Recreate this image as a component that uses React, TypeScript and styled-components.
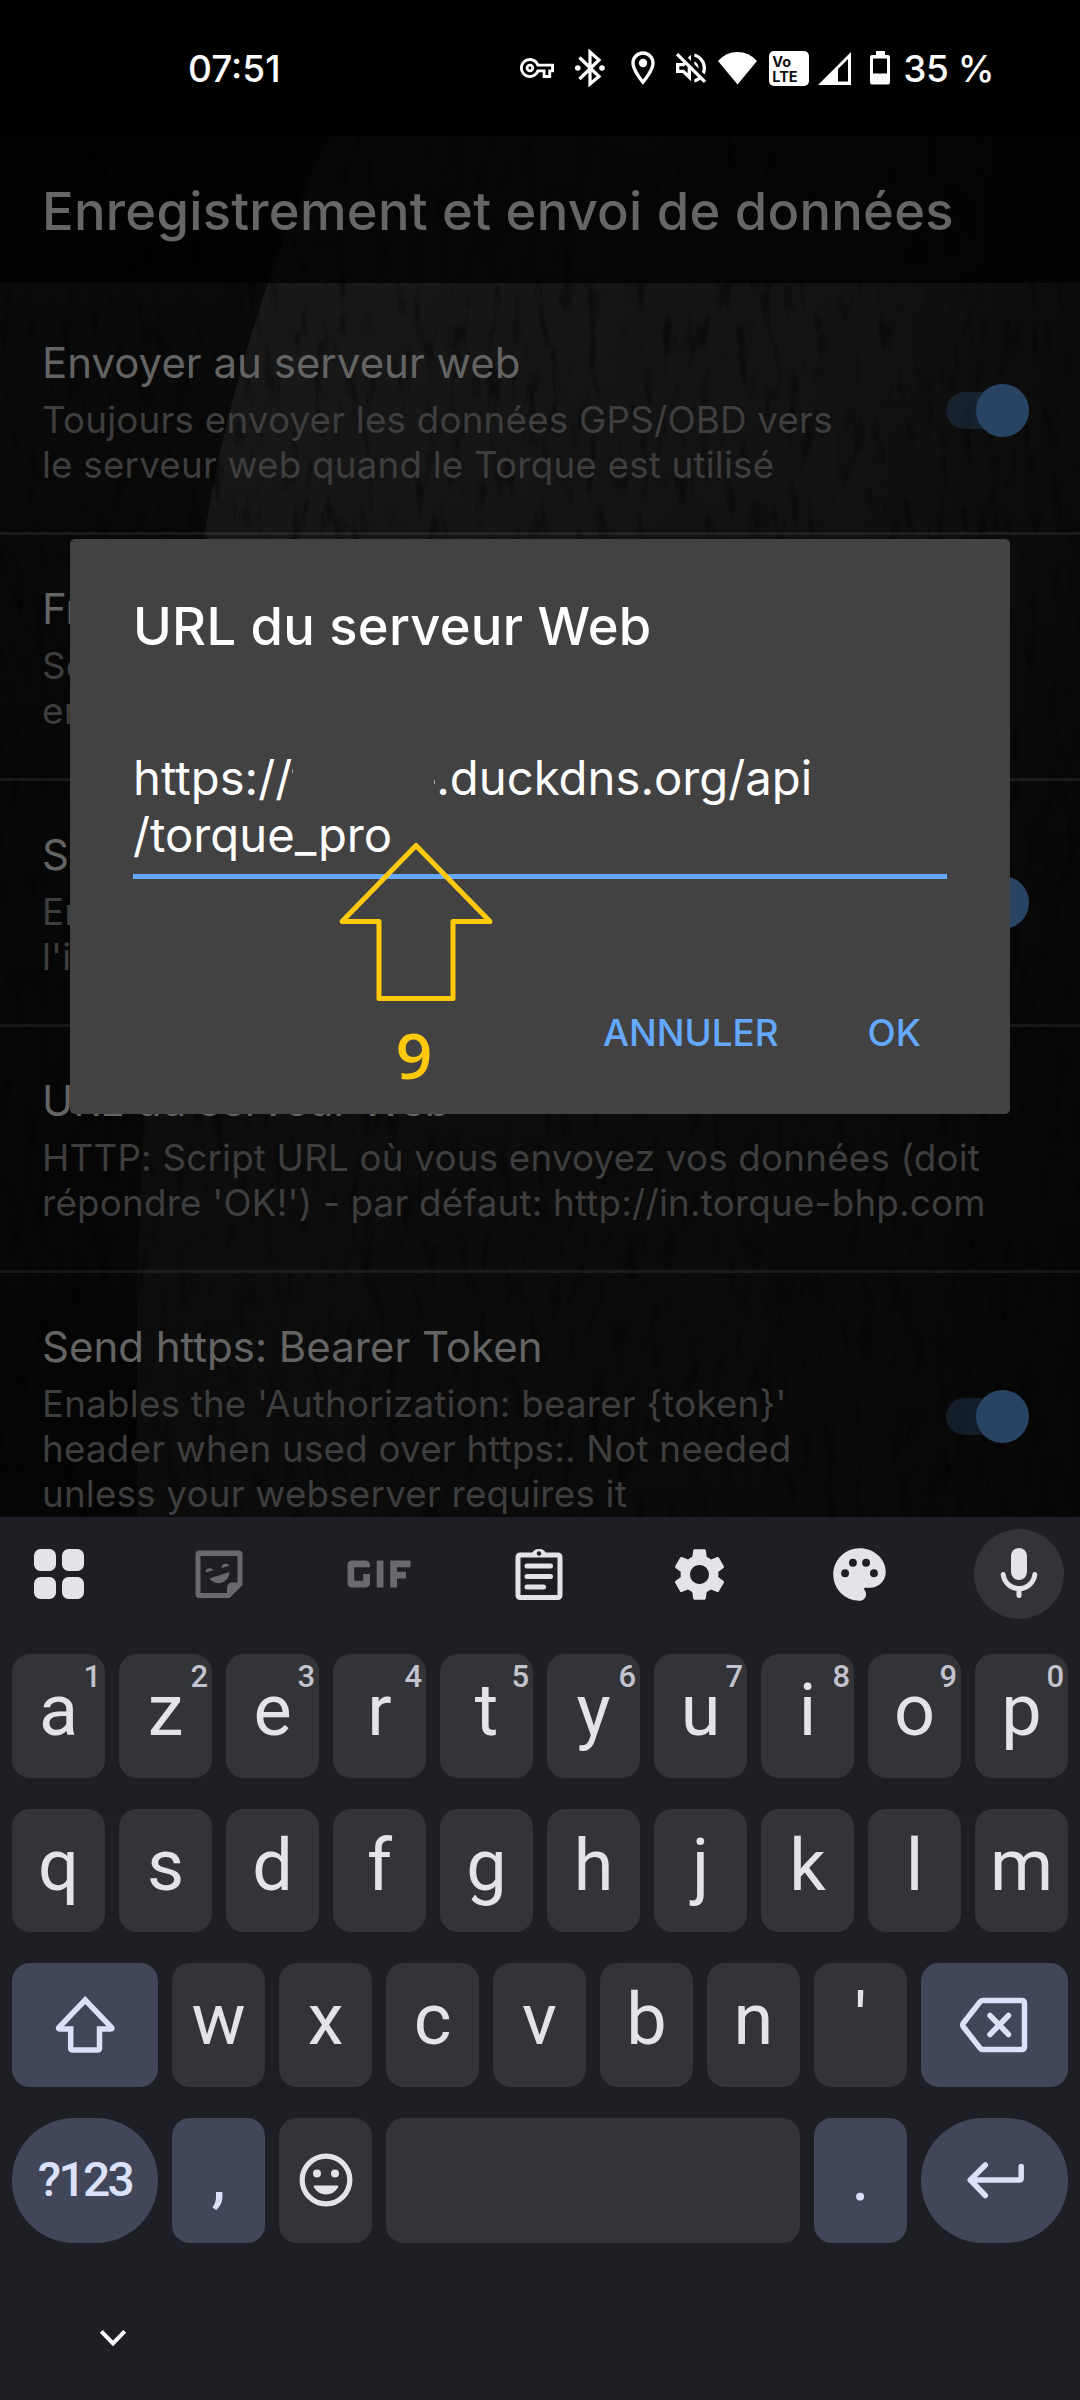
import React from "react";
import styled, { createGlobalStyle, css } from "styled-components";
import {
  MdOutlineVpnKey,
  MdOutlineLocationOn,
  MdOutlineVolumeOff,
  MdGif,
  MdSettings,
} from "react-icons/md";

const GlobalStyle = createGlobalStyle`
  * { box-sizing: border-box; }
  body { margin: 0; background: #000; }
`;

const UI_FONT = `Inter, Roboto, "Liberation Sans", sans-serif`;
const KEY_FONT = `Roboto, Inter, "Liberation Sans", sans-serif`;

const Screen = styled.div`
  position: relative;
  width: 1080px;
  height: 2400px;
  display: flex;
  flex-direction: column;
  overflow: hidden;
  background: #000;
  font-family: ${UI_FONT};
`;

/* ---------- status bar ---------- */

const StatusBar = styled.header`
  height: 136px;
  flex: none;
  display: flex;
  align-items: flex-start;
  justify-content: space-between;
  padding: 46px 86px 0 188px;
  color: #fff;
`;

const StatusText = styled.span<{ $gap?: number; $light?: boolean }>`
  font-size: 37px;
  font-weight: ${(p) => (p.$light ? 450 : 500)};
  line-height: 45px;
  letter-spacing: ${(p) => (p.$light ? -0.5 : 0)}px;
  margin-left: ${(p) => p.$gap ?? 0}px;
  white-space: pre;
`;

const StatusIcons = styled.div`
  display: flex;
  align-items: center;
  height: 44px;
`;

const Slot = styled.span<{ $w: number; $gap?: number }>`
  width: ${(p) => p.$w}px;
  margin-left: ${(p) => p.$gap ?? 0}px;
  height: 44px;
  display: flex;
  align-items: center;
  justify-content: center;
  svg { flex: none; display: block; }
`;

const VoLte = styled.span`
  width: 40px;
  height: 35px;
  border-radius: 5px;
  background: #fff;
  color: #111;
  padding: 3px 0 0 3px;
  font: 700 14.5px/15px ${UI_FONT};
  display: flex;
  flex-direction: column;
`;

/* ---------- settings page ---------- */

const Page = styled.main`
  position: relative;
  height: 1381px;
  flex: none;
  overflow: hidden;
  display: flex;
  flex-direction: column;
`;

const Backdrop = styled.svg`
  position: absolute;
  inset: 0;
  z-index: 0;
`;

const TitleBar = styled.div`
  position: relative;
  height: 147px;
  flex: none;
  display: flex;
  align-items: center;
  padding: 3px 42px 0;
  background: rgba(0, 0, 0, 0.72);
`;

const PageTitle = styled.h1`
  margin: 0;
  font-size: 52.5px;
  font-weight: 500;
  line-height: 64px;
  letter-spacing: 0.25px;
  color: #666;
  white-space: nowrap;
`;

const List = styled.div`
  position: relative;
  padding-top: 6px;
  display: flex;
  flex-direction: column;
`;

const Item = styled.div`
  flex: none;
  display: flex;
  align-items: center;
  justify-content: space-between;
  padding: 48px 51px 45px 42px;
  border-bottom: 3px solid rgba(255, 255, 255, 0.07);
`;

const ItemTitle = styled.div`
  font-size: 42px;
  line-height: 51px;
  color: #646464;
  margin-bottom: 9px;
  white-space: nowrap;
`;

const ItemLine = styled.div`
  font-size: 36.75px;
  line-height: 45px;
  letter-spacing: 0.21px;
  color: #3e3e3e;
  white-space: nowrap;
`;

const Switch = styled.div`
  width: 83px;
  height: 37px;
  margin: 0 0 4px;
  flex: none;
  border-radius: 19px;
  background: rgba(44, 72, 112, 0.34);
  display: flex;
  justify-content: flex-end;
  align-items: center;
`;

const Thumb = styled.div`
  width: 53px;
  height: 53px;
  flex: none;
  border-radius: 50%;
  background: #294363;
`;

/* ---------- dialog ---------- */

const Dialog = styled.section`
  position: absolute;
  left: 70px;
  top: 538.5px;
  width: 940px;
  height: 575px;
  border-radius: 5px;
  background: #424242;
  padding: 55px 63px 0;
  display: flex;
  flex-direction: column;
`;

const DialogTitle = styled.h2`
  margin: 0 0 91px;
  font-size: 52.5px;
  font-weight: 500;
  line-height: 64px;
  letter-spacing: 0.25px;
  color: #fff;
`;

const UrlField = styled.div`
  border-bottom: 5px solid #64a8ff;
  height: 130px;
  font-size: 47.25px;
  line-height: 57px;
  color: #fff;
  white-space: nowrap;
`;

const Blank = styled.span`
  display: inline-flex;
  vertical-align: top;
  justify-content: space-between;
  width: 144px;
  height: 40px;
  padding: 0 1px 0 0;
`;

const Speck = styled.span<{ $top: number }>`
  width: 1px;
  height: 4px;
  margin-top: ${(p) => p.$top}px;
  background: #a0a0a0;
`;

const Actions = styled.div`
  display: flex;
  justify-content: flex-end;
  gap: 89px;
  margin-top: 131px;
  padding-right: 26px;
`;

const Action = styled.span`
  font-size: 36.75px;
  font-weight: 500;
  line-height: 45px;
  color: #64a8ff;
`;

const Annotation = styled.div`
  position: absolute;
  left: 336px;
  top: 840px;
  width: 160px;
  display: flex;
  flex-direction: column;
  align-items: center;
  color: #ffc90e;
  svg { display: block; }
`;

const StepNumber = styled.span`
  font: 600 64px/50px "Open Sans", "Noto Sans", sans-serif;
  margin: 26px 4px 0 0;
`;

/* ---------- keyboard ---------- */

const Keyboard = styled.section`
  flex: 1;
  background: #1e1f24;
  display: flex;
  flex-direction: column;
  font-family: ${KEY_FONT};
`;

const Toolbar = styled.div`
  height: 137px;
  flex: none;
  display: flex;
  align-items: flex-start;
  gap: 70px;
  padding: 12px 0 0 14px;
`;

const Tool = styled.span<{ $active?: boolean; $muted?: boolean }>`
  width: 90px;
  height: 90px;
  flex: none;
  border-radius: 50%;
  display: flex;
  align-items: center;
  justify-content: center;
  color: ${(p) => (p.$muted ? "#696a6f" : "#e3e3e8")};
  background: ${(p) => (p.$active ? "#333438" : "transparent")};
  svg { flex: none; display: block; }
`;

const Rows = styled.div`
  display: flex;
  flex-direction: column;
  gap: 31px;
  padding: 0 12px;
`;

const Row = styled.div<{ $last?: boolean }>`
  display: flex;
  justify-content: space-between;
  gap: 14px;
  height: ${(p) => (p.$last ? 125 : 123.6)}px;
`;

const Key = styled.div<{ $accent?: boolean; $wide?: number; $space?: boolean; $round?: boolean }>`
  position: relative;
  flex: ${(p) => (p.$space ? "1 1 0" : "none")};
  width: ${(p) => p.$wide ?? 93}px;
  border-radius: ${(p) => (p.$round ? 62 : 18)}px;
  background: ${(p) => (p.$accent ? "#414659" : "#333438")};
  color: ${(p) => (p.$accent ? "#dce1fa" : "#e3e3e8")};
  display: flex;
  align-items: center;
  justify-content: center;
  font-size: 72px;
  line-height: 84px;
  svg { display: block; }
  ${(p) =>
    p.$round &&
    css`
      font-size: 48px;
      font-weight: 500;
      letter-spacing: -2.7px;
    `}
`;

const Glyph = styled.span`
  padding-bottom: 9px;
`;

const Hint = styled.span`
  position: absolute;
  top: 5px;
  right: 4px;
  font-size: 31px;
  line-height: 36px;
  font-weight: 500;
  color: #c3c3cf;
`;

const NavBar = styled.div`
  display: flex;
  padding: 83px 0 0 96px;
`;

const SETTINGS = [
  {
    title: "Envoyer au serveur web",
    lines: ["Toujours envoyer les données GPS/OBD vers", "le serveur web quand le Torque est utilisé"],
    on: true,
  },
  { title: "Fr", lines: ["Se", "en"] },
  { title: "S", lines: ["En", "l'i"], on: true },
  {
    title: "URL du serveur Web",
    lines: ["HTTP: Script URL où vous envoyez vos données (doit", "répondre 'OK!') - par défaut: http://in.torque-bhp.com"],
  },
  {
    title: "Send https: Bearer Token",
    lines: ["Enables the 'Authorization: bearer {token}'", "header when used over https:. Not needed", "unless your webserver requires it"],
    on: true,
  },
];

const TOP = "azertyuiop".split("");
const MIDDLE = "qsdfghjklm".split("");
const BOTTOM = "wxcvbn'".split("");

function Background() {
  return (
    <Backdrop width="1080" height="1381" viewBox="0 136 1080 1381">
      <defs>
        <linearGradient id="left" x1="0" y1="0" x2="0" y2="1">
          <stop offset="0" stopColor="#0b0b0b" />
          <stop offset="0.4" stopColor="#080808" />
          <stop offset="1" stopColor="#050505" />
        </linearGradient>
        <linearGradient id="disc" x1="0" y1="0" x2="0" y2="1">
          <stop offset="0" stopColor="#1a1a1a" />
          <stop offset="0.25" stopColor="#171717" />
          <stop offset="0.5" stopColor="#101010" />
          <stop offset="0.75" stopColor="#0d0d0d" />
          <stop offset="1" stopColor="#0c0c0c" />
        </linearGradient>
        <linearGradient id="fade" x1="0" y1="0" x2="1" y2="0">
          <stop offset="0.25" stopColor="#000" stopOpacity="0" />
          <stop offset="0.8" stopColor="#000" stopOpacity="0.25" />
          <stop offset="1" stopColor="#000" stopOpacity="0.55" />
        </linearGradient>
        <filter id="grain" x="0" y="0" width="100%" height="100%">
          <feTurbulence type="fractalNoise" baseFrequency="0.08 0.022" numOctaves="4" seed="7" />
          <feColorMatrix values="0 0 0 0 0  0 0 0 0 0  0 0 0 0 0  4 0 0 0 -2.25" />
        </filter>
      </defs>
      <rect y="136" width="1080" height="1381" fill="url(#left)" />
      <path d="M330 136Q292 210 268 283Q222 420 205 533Q150 850 144 1113L137 1290V1517H1080V136Z" fill="url(#disc)" />
      <rect y="136" width="1080" height="1381" fill="url(#fade)" />
      <rect y="136" width="1080" height="1381" filter="url(#grain)" opacity="0.4" />
    </Backdrop>
  );
}

function StatusRow() {
  return (
    <StatusBar>
      <StatusText>07:51</StatusText>
      <StatusIcons>
        <Slot $w={34}><MdOutlineVpnKey size={34} /></Slot>
        <Slot $w={30} $gap={21}>
          <svg width="30" height="38" viewBox="577 49 30 38" fill="none" stroke="#fff" strokeWidth="3.2">
            <path d="M581.5 57.5L601 76.5L592 84V52L601 60L581.5 79" />
            <circle cx="579.8" cy="68" r="2.8" fill="#fff" stroke="none" />
            <circle cx="604" cy="68" r="2.8" fill="#fff" stroke="none" />
          </svg>
        </Slot>
        <Slot $w={24} $gap={26}><MdOutlineLocationOn size={40} /></Slot>
        <Slot $w={30} $gap={21}><MdOutlineVolumeOff size={40} /></Slot>
        <Slot $w={39} $gap={12}>
          <svg width="39" height="34" viewBox="720 50 39 34" fill="#fff">
            <path d="M720 60Q728 51 739.5 51T759 60L739.5 83.5Z" />
          </svg>
        </Slot>
        <Slot $w={40} $gap={12}>
          <VoLte><span>Vo</span><span>LTE</span></VoLte>
        </Slot>
        <Slot $w={34} $gap={9}>
          <svg width="34" height="34" viewBox="820 50 34 34" fill="#fff" fillRule="evenodd">
            <path d="M820 84L853 51V84ZM840 68V80.500H850V58Z" />
          </svg>
        </Slot>
        <Slot $w={20} $gap={18}>
          <svg width="20" height="34" viewBox="872 50 20 34" fill="#fff" fillRule="evenodd">
            <path d="M878 50H887V54H890a2 2 0 0 1 2 2V81.500a2 2 0 0 1-2 2H874a2 2 0 0 1-2-2V56a2 2 0 0 1 2-2H878ZM875 57.500V72.500H889V57.500Z" />
          </svg>
        </Slot>
        <StatusText $gap={13} $light>35 %</StatusText>
      </StatusIcons>
    </StatusBar>
  );
}

function StickerIcon() {
  return (
    <svg width="50" height="50" viewBox="194.500 1549 50 50" fill="currentColor">
      <path
        fillRule="evenodd"
        d="M200 1550.500H239a4 4 0 0 1 4 4V1585L230 1598H200a4 4 0 0 1-4-4V1554.500a4 4 0 0 1 4-4ZM201 1556V1593H227.500V1587.500a5 5 0 0 1 5-5H238V1556Z"
      />
      <path d="M206 1572.500a4.300 4.300 0 0 1 8-2.200ZM222 1568a4.300 4.300 0 0 1 8-2.200ZM210 1578.500L230 1572A11 11 0 0 1 210 1578.500Z" />
    </svg>
  );
}

function ClipboardIcon() {
  return (
    <svg width="50" height="56" viewBox="514.500 1544 50 56" fill="none" stroke="currentColor" strokeWidth="5" strokeLinecap="round">
      <rect x="518.500" y="1553" width="42" height="42.500" rx="2" />
      <path d="M527.500 1564H551M527.500 1574.500H551M527.500 1585H544" />
      <path d="M532 1553a7.700 7.700 0 0 1 15 0Z" fill="currentColor" stroke="none" />
      <circle cx="539.500" cy="1551.500" r="2.200" fill="#1e1f24" stroke="none" />
    </svg>
  );
}

function KeyboardPanel() {
  return (
    <Keyboard>
      <Toolbar>
        <Tool>
          <svg width="50" height="50" viewBox="0 0 50 50" fill="currentColor">
            <rect width="22" height="22" rx="6.500" />
            <rect x="28" width="22" height="22" rx="6.500" />
            <rect y="28" width="22" height="22" rx="6.500" />
            <rect x="28" y="28" width="22" height="22" rx="6.500" />
          </svg>
        </Tool>
        <Tool $muted><StickerIcon /></Tool>
        <Tool $muted><MdGif size={108} /></Tool>
        <Tool><ClipboardIcon /></Tool>
        <Tool><MdSettings size={63} /></Tool>
        <Tool>
          <svg width="63" height="63" viewBox="0 0 24 24" fill="currentColor" fillRule="evenodd">
            <path d="M12 2C6.490 2 2 6.490 2 12s4.490 10 10 10c1.380 0 2.500-1.120 2.500-2.500 0-.610-.230-1.200-.640-1.670-.080-.100-.130-.210-.130-.330 0-.280.220-.500.500-.500H16c3.310 0 6-2.690 6-6 0-4.960-4.490-9-10-9zM6.500 13a1.500 1.500 0 1 1 0-3 1.500 1.500 0 0 1 0 3zm3-4a1.500 1.500 0 1 1 0-3 1.500 1.500 0 0 1 0 3zm5 0a1.500 1.500 0 1 1 0-3 1.500 1.500 0 0 1 0 3zm3 4a1.500 1.500 0 1 1 0-3 1.500 1.500 0 0 1 0 3z" />
          </svg>
        </Tool>
        <Tool $active>
          <svg width="40" height="52" viewBox="999.500 1548 40 52" fill="none" stroke="currentColor" strokeWidth="5" strokeLinecap="round">
            <rect x="1011.500" y="1548" width="16" height="32" rx="8" fill="currentColor" stroke="none" />
            <path d="M1003.700 1574.500a15.900 15.900 0 0 0 31.600 0M1019.500 1589V1595.500" />
          </svg>
        </Tool>
      </Toolbar>
      <Rows>
        <Row>
          {TOP.map((k, i) => (
            <Key key={k}>
              <Glyph>{k}</Glyph>
              <Hint>{(i + 1) % 10}</Hint>
            </Key>
          ))}
        </Row>
        <Row>
          {MIDDLE.map((k) => (
            <Key key={k}><Glyph>{k}</Glyph></Key>
          ))}
        </Row>
        <Row>
          <Key $accent $wide={146}>
            <svg width="62" height="60" viewBox="54 1995 62 60" fill="none" stroke="currentColor" strokeWidth="5.500">
              <path d="M85.200 2000L59.300 2027Q57.500 2029 60 2029H70.700V2048Q70.700 2050 72.700 2050H97.500Q99.500 2050 99.500 2048V2029H110.500Q113 2029 111.200 2027Z" />
            </svg>
          </Key>
          {BOTTOM.map((k) => (
            <Key key={k}><Glyph>{k}</Glyph></Key>
          ))}
          <Key $accent $wide={147}>
            <svg width="70" height="60" viewBox="959.500 1995 70 60" fill="none" stroke="currentColor" strokeWidth="5.500" strokeLinecap="round">
              <path d="M982 2000.500H1021Q1024 2000.500 1024 2003.500V2046.500Q1024 2049.500 1021 2049.500H982Q980.500 2049.500 979.500 2048L963 2027Q961.500 2025 963 2023L979.500 2002Q980.500 2000.500 982 2000.500Z" />
              <path d="M989.500 2015.500L1008 2034.500M1008 2015.500L989.500 2034.500" />
            </svg>
          </Key>
        </Row>
        <Row $last>
          <Key $accent $wide={146} $round>?123</Key>
          <Key $accent><Glyph>,</Glyph></Key>
          <Key>
            <svg width="54" height="54" viewBox="298.500 2153.500 54 54" fill="currentColor">
              <circle cx="325.500" cy="2180.500" r="23.800" fill="none" stroke="currentColor" strokeWidth="5.200" />
              <circle cx="316.500" cy="2174" r="4" />
              <circle cx="334.500" cy="2174" r="4" />
              <path d="M314 2186H337Q338.500 2186 337.500 2188Q333 2195 325.500 2195T313.500 2188Q312.500 2186 314 2186Z" />
            </svg>
          </Key>
          <Key $space />
          <Key $accent><Glyph>.</Glyph></Key>
          <Key $accent $wide={147} $round>
            <svg width="60" height="40" viewBox="964.500 2160.500 60 40" fill="none" stroke="currentColor" strokeWidth="5.500" strokeLinecap="round" strokeLinejoin="round">
              <path d="M984.800 2165.500L969.800 2180.500L984.800 2196M971 2180.500H1018.700Q1020.700 2180.500 1020.700 2178.500V2167" />
            </svg>
          </Key>
        </Row>
      </Rows>
      <NavBar>
        <svg width="34" height="24" viewBox="96 2326 34 24" fill="none" stroke="#fff" strokeWidth="4">
          <path d="M101.300 2331.300L113 2343.300L124.700 2331.300" />
        </svg>
      </NavBar>
    </Keyboard>
  );
}

export default function App() {
  return (
    <Screen>
      <GlobalStyle />
      <StatusRow />
      <Page>
        <Background />
        <TitleBar>
          <PageTitle>Enregistrement et envoi de données</PageTitle>
        </TitleBar>
        <List>
          {SETTINGS.map((s) => (
            <Item key={s.title}>
              <div>
                <ItemTitle>{s.title}</ItemTitle>
                {s.lines.map((l) => (
                  <ItemLine key={l}>{l}</ItemLine>
                ))}
              </div>
              {s.on && <Switch><Thumb /></Switch>}
            </Item>
          ))}
        </List>
      </Page>
      <KeyboardPanel />
      <Dialog>
        <DialogTitle>URL du serveur Web</DialogTitle>
        <UrlField>
          https://
          <Blank><Speck $top={20} /><Speck $top={31} /></Blank>
          .duckdns.org/api
          <br />
          /torque_pro
        </UrlField>
        <Actions>
          <Action>ANNULER</Action>
          <Action>OK</Action>
        </Actions>
      </Dialog>
      <Annotation>
        <svg width="160" height="164" viewBox="335.500 840 160 164" fill="none" stroke="currentColor" strokeWidth="5" strokeLinejoin="round">
          <path d="M415.500 845.500L341.500 921.500H378.500V998.500H452.500V921.500H489.500Z" />
        </svg>
        <StepNumber>9</StepNumber>
      </Annotation>
    </Screen>
  );
}
